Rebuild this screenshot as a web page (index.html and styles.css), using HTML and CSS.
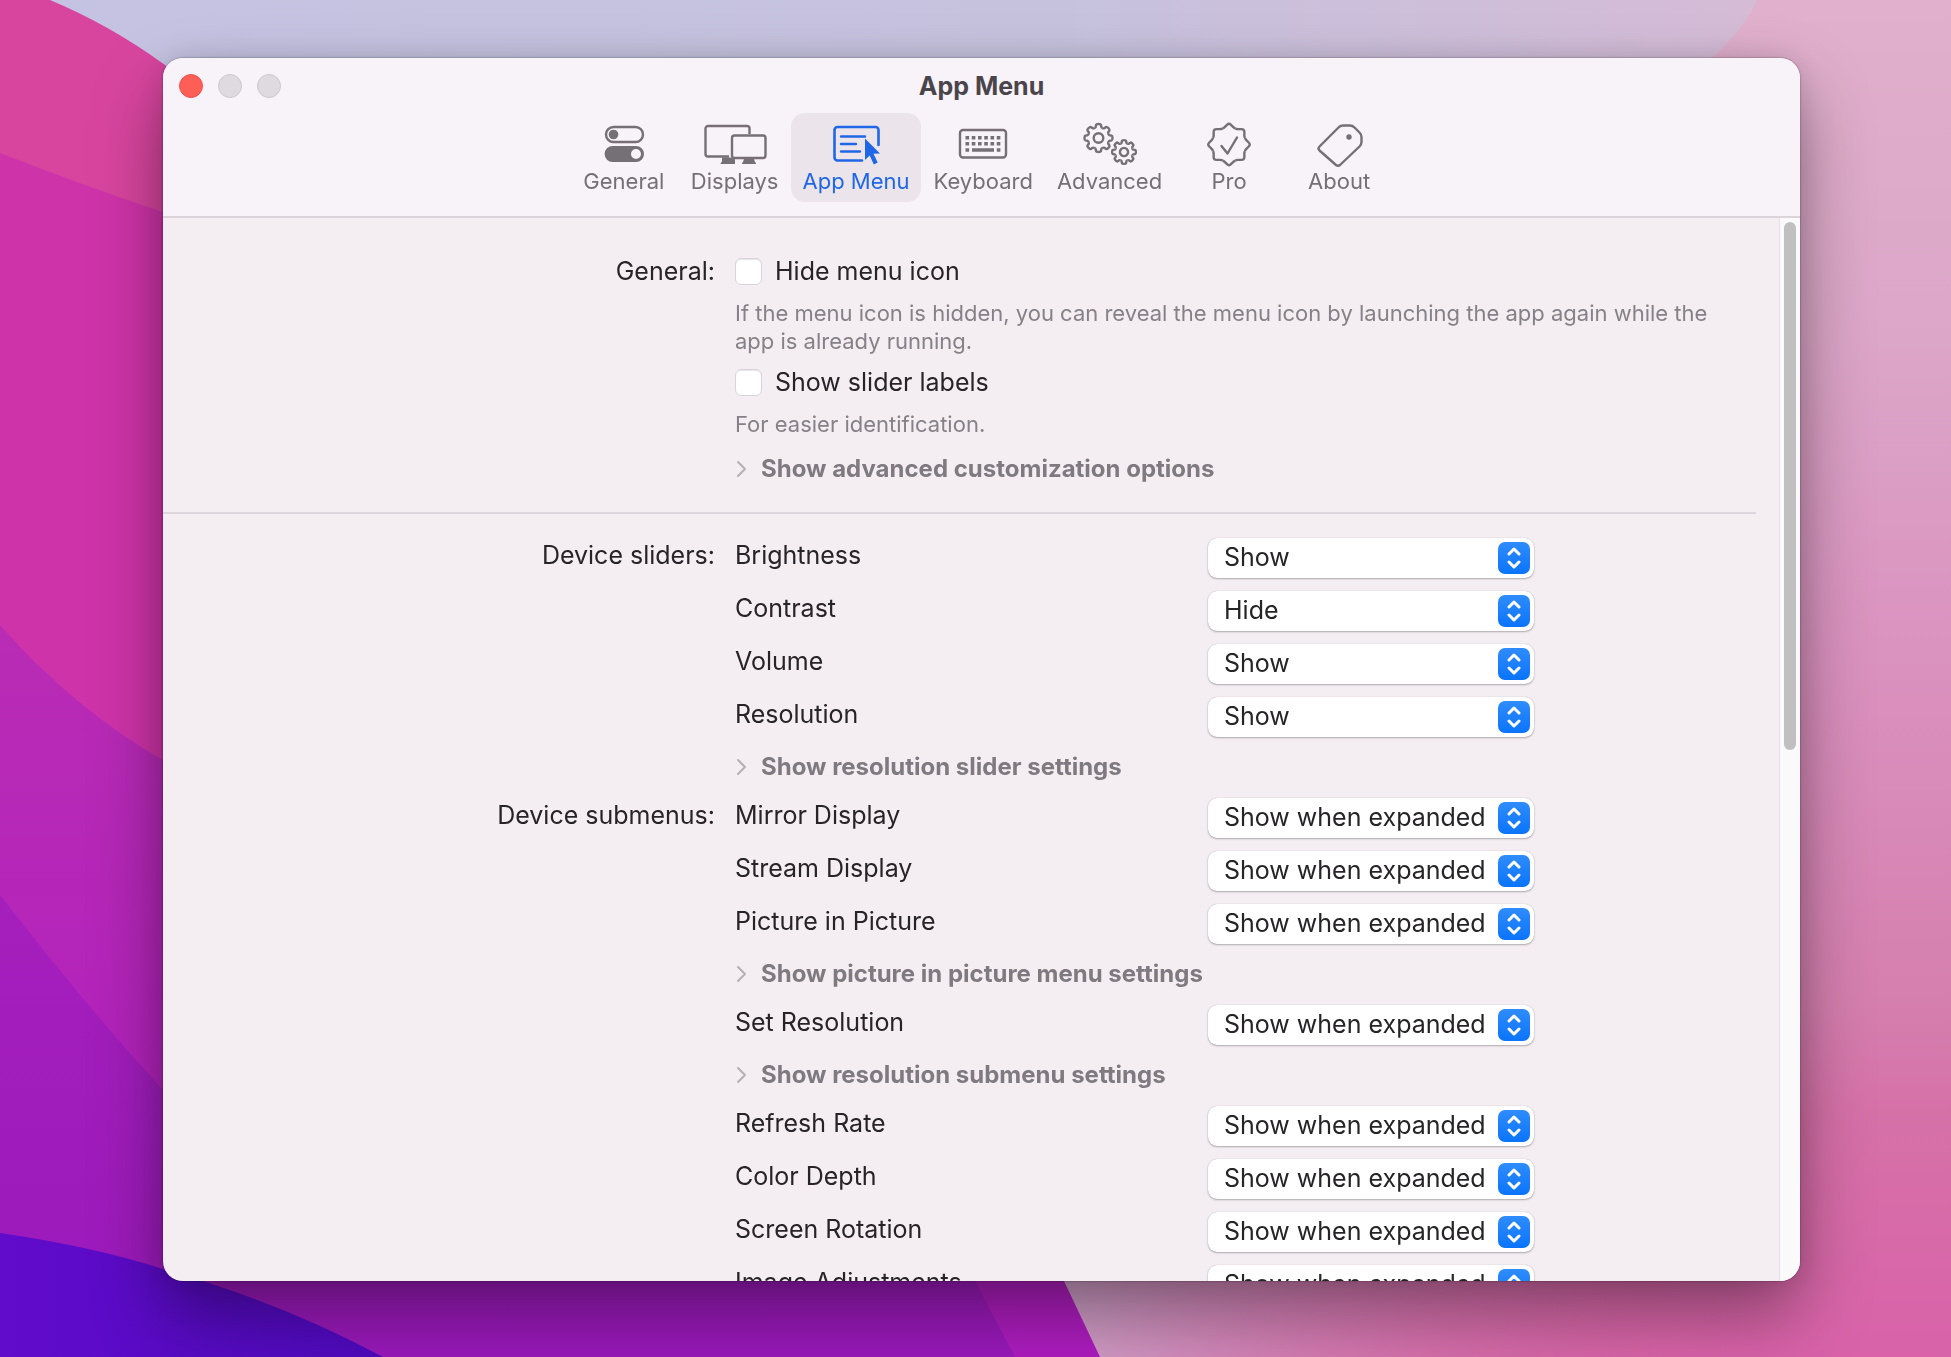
FILE: index.html
```html
<!DOCTYPE html>
<html lang="en">
<head>
<meta charset="utf-8">
<title>App Menu</title>
<link rel="stylesheet" href="styles.css">
</head>
<body>
<svg class="wallpaper" viewBox="0 0 1951 1357" preserveAspectRatio="none" aria-hidden="true">
  <defs>
    <linearGradient id="rose" x1="0" y1="0" x2="0" y2="1">
      <stop offset="0" stop-color="#e0b0cc"/><stop offset=".25" stop-color="#dca6c8"/>
      <stop offset=".52" stop-color="#da8fbd"/><stop offset=".74" stop-color="#d57fae"/>
      <stop offset=".82" stop-color="#d671a8"/><stop offset="1" stop-color="#d962a9"/>
    </linearGradient>
    <linearGradient id="sky" x1="0" y1="0" x2="1" y2="0">
      <stop offset="0" stop-color="#c5c3e2"/><stop offset=".6" stop-color="#c6c2de"/><stop offset="1" stop-color="#d5bbd6"/>
    </linearGradient>
    <linearGradient id="plum" x1="0" y1="0" x2="0" y2="1">
      <stop offset="0" stop-color="#b92cb4"/><stop offset="1" stop-color="#ae1cc0"/>
    </linearGradient>
    <linearGradient id="violet" x1="0" y1="0" x2="0" y2="1">
      <stop offset="0" stop-color="#a51fbc"/><stop offset="1" stop-color="#9a19bb"/>
    </linearGradient>
    <linearGradient id="haze" x1="0" y1="0" x2="1" y2="0">
      <stop offset="0" stop-color="#cfa4cb"/><stop offset="1" stop-color="#d9659f" stop-opacity="0"/>
    </linearGradient>
    <linearGradient id="indigo" x1="0" y1="0" x2="1" y2="0">
      <stop offset="0" stop-color="#610bcb"/><stop offset="1" stop-color="#4f0abf"/>
    </linearGradient>
  </defs>
  <path fill="url(#rose)" d="M0 0h1951v1357H0z"/>
  <path fill="url(#haze)" d="M1040 1100h700v257h-700z"/>
  <path fill="url(#sky)" d="M0 0h1757q-10 25-45 58l-100 200H0z"/>
  <path fill="#d8459f" d="M0 0h50q60 25 115 65l300 300L400 900H0z"/>
  <path fill="#cf33a9" d="M0 153q90 35 163 59l300 100v700H0z"/>
  <path fill="url(#plum)" d="M0 625q75 85 163 135l860 440 41 81 36 76H0z"/>
  <path fill="url(#violet)" d="M0 895q85 110 163 195l812 191 40 76H0z"/>
  <path fill="url(#indigo)" d="M0 1233q95 14 163 36 120 34 220 88H0z"/>
</svg>
<svg class="sprites" aria-hidden="true">
  <symbol id="chevron" viewBox="0 0 12 18"><path d="M2 2l7 7-7 7" fill="none" stroke="currentColor" stroke-width="2" stroke-linecap="round" stroke-linejoin="round"/></symbol>
  <symbol id="updown" viewBox="0 0 14 24"><path d="M2 8l5-5 5 5M2 16l5 5 5-5" fill="none" stroke="currentColor" stroke-width="3" stroke-linecap="round" stroke-linejoin="round"/></symbol>
  <g id="gear">
    <path id="tooth" vector-effect="non-scaling-stroke" d="M-4.2-10Q-3-10.2-2.8-11L-2.4-13.2Q-2.2-14 0-14T2.4-13.2L2.8-11Q3-10.2 4.2-10"/>
    <use href="#tooth" transform="rotate(45)"/><use href="#tooth" transform="rotate(90)"/><use href="#tooth" transform="rotate(135)"/>
    <use href="#tooth" transform="rotate(180)"/><use href="#tooth" transform="rotate(225)"/><use href="#tooth" transform="rotate(270)"/><use href="#tooth" transform="rotate(315)"/>
    <circle r="4.8" vector-effect="non-scaling-stroke"/>
  </g>
</svg>

<main class="window">
  <header class="titlebar">
    <div class="title-row">
      <div class="lights">
        <button class="light close" aria-label="Close"></button>
        <button class="light" aria-label="Minimize"></button>
        <button class="light" aria-label="Zoom"></button>
      </div>
      <h1>App Menu</h1>
    </div>
    <nav class="tabs">
      <button class="tab"><svg viewBox="0 0 64 44"><rect x="14" y="5" width="37" height="15" rx="7.5"/><circle class="solid" cx="21.5" cy="12.5" r="4.8"/><path class="solid" fill-rule="evenodd" d="M20.600 24h23.400a8 8 0 0 1 0 16H20.600a8 8 0 0 1 0-16zM44 27a5 5 0 0 0 0 10 5 5 0 0 0 0-10z"/></svg><span>General</span></button>
      <button class="tab"><svg viewBox="0 0 64 44"><path d="M26 34.500H5a2.500 2.500 0 0 1-2.500-2.500V6.500A2.500 2.500 0 0 1 5 4h39a2.500 2.500 0 0 1 2.500 2.500V12"/><rect x="29" y="13.500" width="33.500" height="22.500" rx="2.500"/><path class="solid" d="M19 35.500h8.500L32 37.500V42H17.500q0-1.500 1.500-2.500zM41 37h10l.8 2.500q1.200 1 1.200 2.500H39q0-1.500 1.200-2.500z"/></svg><span>Displays</span></button>
      <button class="tab active"><svg viewBox="0 0 64 44"><path d="M54.500 23V8a3 3 0 0 0-3-3H13.500a3 3 0 0 0-3 3v27.500a3 3 0 0 0 3 3H38" stroke-width="2.600" stroke-linecap="round"/><path d="M17 14.500h24M17 22h15M17 29.500h19" stroke-linecap="round"/><path class="solid" d="M41 16.500L56 31.500l-6.500.3 4.200 8.700-3.900 1.900-4.100-8.900-4.700 4.500z"/></svg><span>App Menu</span></button>
      <button class="tab"><svg viewBox="0 0 64 44"><rect x="9" y="8" width="46" height="27.500" rx="3"/><path stroke-width="3.600" stroke-dasharray="3.600 2.650" d="M14.500 15.700h35M14.500 21.700h35"/><path stroke-width="3.600" d="M14.500 28h3.600M21 28h22M45.800 28h3.600"/></svg><span>Keyboard</span></button>
      <button class="tab"><svg viewBox="0 0 64 44"><use href="#gear" transform="translate(20.500 16)"/><use href="#gear" transform="translate(46 30) scale(.85)"/></svg><span>Advanced</span></button>
      <button class="tab"><svg viewBox="0 0 64 44"><g transform="translate(32 22.500)"><path id="point" d="M-6.700-16.200Q-5.500-16.200-4.600-17.100L-2-19.700Q0-21.700 2-19.700L4.600-17.100Q5.500-16.200 6.700-16.200"/><use href="#point" transform="rotate(45)"/><use href="#point" transform="rotate(90)"/><use href="#point" transform="rotate(135)"/><use href="#point" transform="rotate(180)"/><use href="#point" transform="rotate(225)"/><use href="#point" transform="rotate(270)"/><use href="#point" transform="rotate(315)"/></g><path d="M24.500 24l6 7.500L40 15.500" stroke-linecap="round"/></svg><span>Pro</span></button>
      <button class="tab"><svg viewBox="0 0 64 44"><path d="M12.500 24.500L32 5Q34 3.500 36 3.500h7q2.500 0 4.500 2l5 5q2 2 2 4.500v5q0 2.500-2 4.500L33 43q-2 1.500-4 0L12.500 28.500q-2-2 0-4z"/><circle class="solid" cx="42" cy="15" r="2.700"/></svg><span>About</span></button>
    </nav>
  </header>

  <div class="body">
    <div class="content">
      <section class="section general">
        <h2>General:</h2>
        <div class="fields">
          <label class="check"><input type="checkbox">Hide menu icon</label>
          <p>If the menu icon is hidden, you can reveal the menu icon by launching the app again while the app is already running.</p>
          <label class="check"><input type="checkbox">Show slider labels</label>
          <p>For easier identification.</p>
          <button class="disclosure"><svg><use href="#chevron"/></svg>Show advanced customization options</button>
        </div>
      </section>
      <hr>
      <section class="section">
        <h2>Device sliders:</h2>
        <div class="fields">
          <div class="row"><label for="brightness">Brightness</label><div class="popup"><select id="brightness"><option>Show</option><option>Hide</option></select><span class="arrows"><svg><use href="#updown"/></svg></span></div></div>
          <div class="row"><label for="contrast">Contrast</label><div class="popup"><select id="contrast"><option>Hide</option><option>Show</option></select><span class="arrows"><svg><use href="#updown"/></svg></span></div></div>
          <div class="row"><label for="volume">Volume</label><div class="popup"><select id="volume"><option>Show</option><option>Hide</option></select><span class="arrows"><svg><use href="#updown"/></svg></span></div></div>
          <div class="row"><label for="resolution">Resolution</label><div class="popup"><select id="resolution"><option>Show</option><option>Hide</option></select><span class="arrows"><svg><use href="#updown"/></svg></span></div></div>
          <button class="disclosure"><svg><use href="#chevron"/></svg>Show resolution slider settings</button>
        </div>
      </section>
      <section class="section">
        <h2>Device submenus:</h2>
        <div class="fields">
          <div class="row"><label for="mirror">Mirror Display</label><div class="popup"><select id="mirror"><option>Show when expanded</option></select><span class="arrows"><svg><use href="#updown"/></svg></span></div></div>
          <div class="row"><label for="stream">Stream Display</label><div class="popup"><select id="stream"><option>Show when expanded</option></select><span class="arrows"><svg><use href="#updown"/></svg></span></div></div>
          <div class="row"><label for="pip">Picture in Picture</label><div class="popup"><select id="pip"><option>Show when expanded</option></select><span class="arrows"><svg><use href="#updown"/></svg></span></div></div>
          <button class="disclosure"><svg><use href="#chevron"/></svg>Show picture in picture menu settings</button>
          <div class="row"><label for="setres">Set Resolution</label><div class="popup"><select id="setres"><option>Show when expanded</option></select><span class="arrows"><svg><use href="#updown"/></svg></span></div></div>
          <button class="disclosure"><svg><use href="#chevron"/></svg>Show resolution submenu settings</button>
          <div class="row"><label for="refresh">Refresh Rate</label><div class="popup"><select id="refresh"><option>Show when expanded</option></select><span class="arrows"><svg><use href="#updown"/></svg></span></div></div>
          <div class="row"><label for="depth">Color Depth</label><div class="popup"><select id="depth"><option>Show when expanded</option></select><span class="arrows"><svg><use href="#updown"/></svg></span></div></div>
          <div class="row"><label for="rotation">Screen Rotation</label><div class="popup"><select id="rotation"><option>Show when expanded</option></select><span class="arrows"><svg><use href="#updown"/></svg></span></div></div>
          <div class="row"><label for="image">Image Adjustments</label><div class="popup"><select id="image"><option>Show when expanded</option></select><span class="arrows"><svg><use href="#updown"/></svg></span></div></div>
        </div>
      </section>
    </div>
    <div class="scrollbar"><div class="thumb"></div></div>
  </div>
</main>
</body>
</html>
```
FILE: styles.css
```css
* { box-sizing: border-box; }

body {
  margin: 0;
  height: 100vh;
  padding: 58px 151px 76px 163px;
  display: flex;
  overflow: hidden;
  font-family: Inter, "Liberation Sans", sans-serif;
  font-size: 25px;
  line-height: 30px;
  color: #272428;
}

button, select, input { font: inherit; color: inherit; margin: 0; }
button { border: 0; padding: 0; background: none; }

.wallpaper { position: fixed; inset: 0; width: 100%; height: 100%; z-index: -1; }
.sprites { position: absolute; width: 0; height: 0; }

.window {
  flex: 1;
  min-width: 0;
  display: flex;
  flex-direction: column;
  overflow: hidden;
  border-radius: 20px;
  background: #f4eef3;
  box-shadow: 0 0 2px rgba(0, 0, 0, .5), 0 34px 70px rgba(0, 0, 0, .38), 0 0 30px rgba(0, 0, 0, .12);
}

/* Title bar and toolbar */
.titlebar { flex: none; background: #f8f2f9; border-bottom: 2px solid #dbd5db; padding-bottom: 14px; }
.title-row {
  display: grid;
  grid-template-columns: 1fr auto 1fr;
  align-items: center;
  height: 55px;
  padding: 0 16px;
}
.lights { display: flex; gap: 15px; }
.light { width: 24px; height: 24px; border-radius: 50%; background: #dfd9e0; border: 1px solid #cdc7ce; }
.light.close { background: #fd5e56; border-color: #ee5450; }
h1 { margin: 0; font-size: 25px; font-weight: 700; color: #4a454b; }

.tabs { display: flex; justify-content: center; gap: 2px; }
.tab {
  display: flex;
  flex-direction: column;
  align-items: center;
  gap: 3px;
  min-width: 108px;
  padding: 9px 11px;
  border-radius: 14px;
  font-size: 22px;
  line-height: 24px;
  color: #747075;
}
.tab svg { width: 64px; height: 44px; fill: none; stroke: currentColor; stroke-width: 2.4; stroke-linejoin: round; overflow: visible; }
.tab .solid { fill: currentColor; stroke: none; }
.tab.active { background: #ebe5eb; color: #1f67e6; }

/* Settings */
.body { flex: 1; min-height: 0; display: flex; }
.content { flex: 1; min-width: 0; overflow: hidden; }
.section { display: grid; grid-template-columns: 552fr 1044fr; column-gap: 20px; }
.section h2 { margin: 0; padding-top: 9px; font-size: 25px; font-weight: 400; text-align: right; }
.general { padding: 36px 0 22px; }
.general h2 { padding-top: 2px; }
.fields { display: flex; flex-direction: column; align-items: flex-start; }

.check { display: flex; align-items: center; gap: 13px; height: 34px; }
.check input {
  appearance: none;
  width: 27px;
  height: 27px;
  border: 1px solid #d9d4d9;
  border-radius: 6px;
  background: #fff;
  box-shadow: inset 0 1px 1px rgba(0, 0, 0, .1);
}
.fields p { margin: 11px 0 10px; max-width: 990px; font-size: 22px; line-height: 28px; color: #868187; }

.disclosure {
  display: flex;
  align-items: center;
  gap: 13px;
  height: 48px;
  padding-left: 1px;
  font-size: 24px;
  font-weight: 700;
  color: #7f7a80;
}
.general .disclosure { height: 42px; }
.disclosure svg { width: 12px; height: 18px; color: #b4afb5; }

hr { margin: 0 23px 17px 0; border: 0; border-top: 2px solid #ddd7dd; }

.row { display: grid; grid-template-columns: 473px 326px; height: 53px; align-items: center; }
.row label { padding-bottom: 6px; }
.popup { position: relative; }
.popup select {
  appearance: none;
  display: block;
  width: 100%;
  height: 40px;
  padding: 0 44px 2px 16px;
  border: 0;
  border-radius: 9px;
  background: #fff;
  box-shadow: 0 0 1px rgba(0, 0, 0, .3), 0 1px 2px rgba(0, 0, 0, .28);
}
.arrows {
  position: absolute;
  top: 4px;
  right: 4px;
  width: 32px;
  height: 32px;
  display: grid;
  place-items: center;
  border-radius: 7px;
  background: linear-gradient(#2f8cfb, #0a74fa);
  color: #fff;
  pointer-events: none;
}
.arrows svg { width: 14px; height: 24px; }

.scrollbar { flex: none; width: 21px; padding: 4px 4px; background: #fbfafb; border-left: 1px solid #e6e1e6; }
.thumb { height: 50%; border-radius: 6px; background: #c1c0c1; }
```
